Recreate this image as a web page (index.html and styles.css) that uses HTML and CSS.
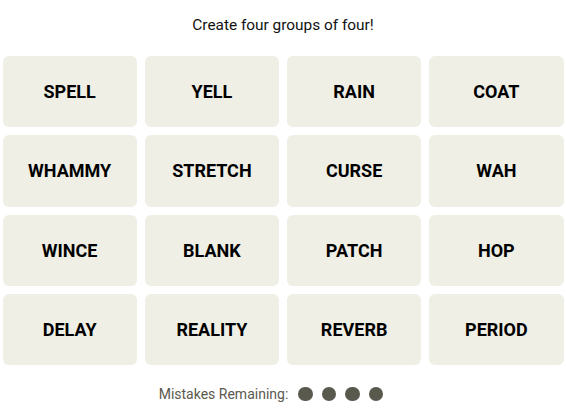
FILE: index.html
```html
<!DOCTYPE html>
<html lang="en">
<head>
<meta charset="utf-8">
<title>Connections</title>
<link rel="stylesheet" href="styles.css">
</head>
<body>
<main class="game">
  <p class="prompt">Create four groups of four!</p>
  <div class="board">
    <button class="tile">SPELL</button>
    <button class="tile">YELL</button>
    <button class="tile">RAIN</button>
    <button class="tile">COAT</button>
    <button class="tile">WHAMMY</button>
    <button class="tile">STRETCH</button>
    <button class="tile">CURSE</button>
    <button class="tile">WAH</button>
    <button class="tile">WINCE</button>
    <button class="tile">BLANK</button>
    <button class="tile">PATCH</button>
    <button class="tile">HOP</button>
    <button class="tile">DELAY</button>
    <button class="tile">REALITY</button>
    <button class="tile">REVERB</button>
    <button class="tile">PERIOD</button>
  </div>
  <div class="mistakes">
    <span class="mistakes-label">Mistakes Remaining:</span>
    <span class="dots">
      <span class="dot"></span><span class="dot"></span><span class="dot"></span><span class="dot"></span>
    </span>
  </div>
</main>
</body>
</html>
```
FILE: styles.css
```css
html, body {
  margin: 0;
  padding: 0;
  background: #ffffff;
}

.game {
  width: 561px;
  margin: 0 auto;
  font-family: Roboto, "Liberation Sans", sans-serif;
  color: #000;
}

.prompt {
  margin: 0;
  height: 56px;
  box-sizing: border-box;
  padding-top: 15px;
  font-size: 15.4px;
  line-height: 20px;
  text-align: center;
  color: #121212;
}

.board {
  display: grid;
  grid-template-columns: repeat(4, 1fr);
  grid-auto-rows: 71.3px;
  gap: 8px;
}

.tile {
  border: none;
  border-radius: 6px;
  background: #efefe6;
  font-family: Roboto, "Liberation Sans", sans-serif;
  font-weight: 700;
  font-size: 18px;
  color: #000;
  padding: 0;
  margin: 0;
}

.mistakes {
  display: flex;
  align-items: center;
  justify-content: center;
  gap: 10px;
  margin-top: 21px;
  padding-right: 24px;
  height: 16px;
}

.mistakes-label {
  font-size: 14px;
  color: #5a594e;
}

.dots {
  display: flex;
  gap: 9px;
}

.dot {
  width: 14.5px;
  height: 14.5px;
  border-radius: 50%;
  background: #5a594e;
}
```
